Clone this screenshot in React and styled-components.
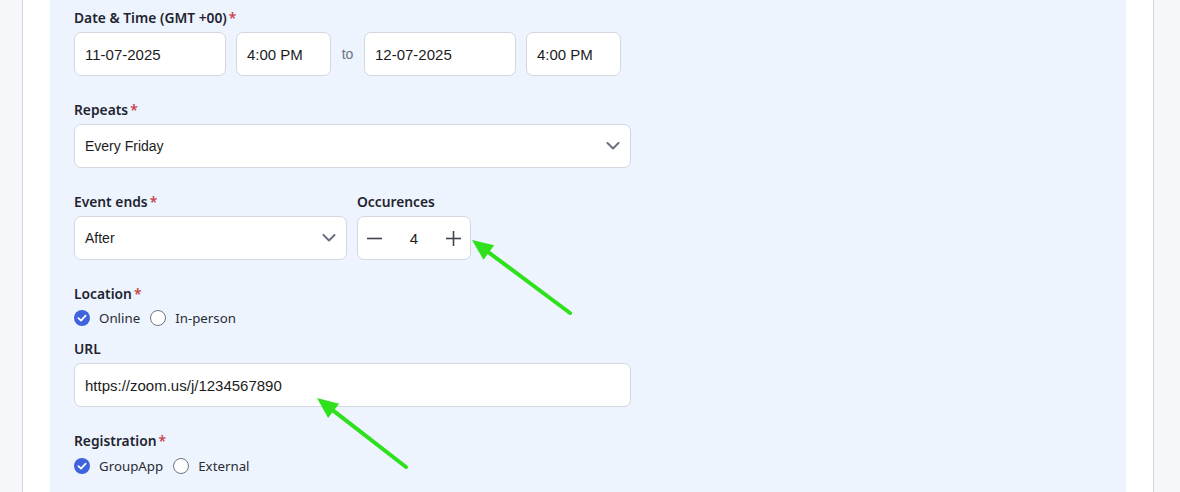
import React from 'react';
import styled, { createGlobalStyle } from 'styled-components';

const COLORS = {
  rail: '#f6f7fa',
  railBorder: '#d6d7dd',
  panel: '#edf4fe',
  border: '#d3d8e0',
  text: '#1c1c1c',
  label: '#1f2430',
  muted: '#6b7280',
  required: '#c9424a',
  accent: '#3e63dd',
  arrow: '#2fe01c',
};

const GlobalStyle = createGlobalStyle`
  html, body {
    margin: 0;
    padding: 0;
    background: ${COLORS.rail};
  }
  * { box-sizing: border-box; }
`;

const Page = styled.div`
  position: relative;
  width: 1180px;
  height: 492px;
  overflow: hidden;
  background: ${COLORS.rail};
  display: flex;
  padding: 0 26px 0 22px;
`;

const Card = styled.div`
  flex: 1;
  background: #fff;
  border-left: 1px solid ${COLORS.railBorder};
  border-right: 1px solid ${COLORS.railBorder};
  padding: 0 27px;
  display: flex;
`;

const Panel = styled.div`
  flex: 1;
  background: ${COLORS.panel};
  padding: 9px 24px 0;
  display: flex;
  flex-direction: column;
`;

const Field = styled.div`
  display: flex;
  flex-direction: column;
  margin-bottom: ${({ $gap }) => $gap ?? 25}px;
`;

const Label = styled.div`
  font-family: 'Noto Sans', 'Open Sans', sans-serif;
  font-size: 13.8px;
  font-weight: 600;
  line-height: 18px;
  color: ${COLORS.label};
  margin-bottom: 5px;
  margin-top: ${({ $top }) => $top || 0}px;
`;

const Required = styled.span`
  color: ${COLORS.required};
  margin-left: 2px;
`;

const Row = styled.div`
  display: flex;
  align-items: center;
  gap: 10px;
`;

const Box = styled.div`
  width: ${({ $w }) => $w}px;
  height: 44px;
  background: #fff;
  border: 1px solid ${COLORS.border};
  border-radius: 7px;
  display: flex;
  align-items: center;
  justify-content: space-between;
  padding: 0 10px;
  font-family: 'Liberation Sans', Arial, sans-serif;
  font-size: ${({ $size }) => $size || 15}px;
  color: ${COLORS.text};
`;

const ToText = styled.span`
  width: 13px;
  text-align: center;
  font-family: 'Liberation Sans', Arial, sans-serif;
  font-size: 14px;
  color: ${COLORS.muted};
`;

const Stepper = styled(Box)`
  padding: 0 8px;
`;

const StepValue = styled.span`
  font-size: 15px;
`;

const Options = styled.div`
  display: flex;
  align-items: center;
  height: 20px;
  margin-top: ${({ $top }) => $top || 0}px;
  gap: 10px;
`;

const Option = styled.label`
  display: flex;
  align-items: center;
  gap: 9px;
  font-family: 'Noto Sans', 'Open Sans', sans-serif;
  font-size: 13.3px;
  color: #2b2b33;
`;

const EmptyRadio = styled.span`
  width: 16px;
  height: 16px;
  border-radius: 50%;
  border: 1.5px solid #6f7480;
  background: #fff;
`;

const Chevron = () => (
  <svg width="14" height="8" viewBox="0 0 14 8" fill="none">
    <polyline points="1.5,1 7,6.5 12.5,1" stroke="#6b7080" strokeWidth="2" strokeLinecap="round" strokeLinejoin="round" />
  </svg>
);

const Minus = () => (
  <svg width="17" height="17" viewBox="0 0 17 17">
    <line x1="1" y1="8.5" x2="16" y2="8.5" stroke="#3f4450" strokeWidth="1.6" />
  </svg>
);

const Plus = () => (
  <svg width="17" height="17" viewBox="0 0 17 17">
    <line x1="1" y1="8.5" x2="16" y2="8.5" stroke="#3f4450" strokeWidth="1.6" />
    <line x1="8.5" y1="1" x2="8.5" y2="16" stroke="#3f4450" strokeWidth="1.6" />
  </svg>
);

const CheckedRadio = () => (
  <svg width="16" height="16" viewBox="0 0 16 16">
    <circle cx="8" cy="8" r="8" fill={COLORS.accent} />
    <polyline points="4.4,8.2 7,10.6 11.6,5.6" fill="none" stroke="#fff" strokeWidth="1.8" strokeLinecap="round" strokeLinejoin="round" />
  </svg>
);

const Overlay = styled.svg`
  position: absolute;
  left: 0;
  top: 0;
  pointer-events: none;
`;

const arrows = [
  { tail: [570, 313], tip: [472, 240] },
  { tail: [406, 467], tip: [317, 398] },
];

function arrowShape({ tail, tip }) {
  const dx = tip[0] - tail[0];
  const dy = tip[1] - tail[1];
  const len = Math.hypot(dx, dy);
  const ux = dx / len;
  const uy = dy / len;
  const bx = tip[0] - ux * 21;
  const by = tip[1] - uy * 21;
  const nx = -uy;
  const ny = ux;
  const head = `${tip[0]},${tip[1]} ${bx + nx * 9},${by + ny * 9} ${bx - nx * 9},${by - ny * 9}`;
  return { line: [tail[0], tail[1], bx + ux * 2, by + uy * 2], head };
}

const Radio = ({ checked, children }) => (
  <Option>
    {checked ? <CheckedRadio /> : <EmptyRadio />}
    {children}
  </Option>
);

export default function App() {
  return (
    <>
      <GlobalStyle />
      <Page>
        <Card>
          <Panel>
            <Field>
              <Label>Date &amp; Time (GMT +00)<Required>*</Required></Label>
              <Row>
                <Box $w={152}>11-07-2025</Box>
                <Box $w={95}>4:00 PM</Box>
                <ToText>to</ToText>
                <Box $w={152}>12-07-2025</Box>
                <Box $w={95}>4:00 PM</Box>
              </Row>
            </Field>

            <Field>
              <Label>Repeats<Required>*</Required></Label>
              <Box $w={557} $size={14}>
                Every Friday
                <Chevron />
              </Box>
            </Field>

            <Field>
              <Row>
                <div>
                  <Label>Event ends<Required>*</Required></Label>
                  <Box $w={273} $size={14}>
                    After
                    <Chevron />
                  </Box>
                </div>
                <div>
                  <Label>Occurences</Label>
                  <Stepper $w={114}>
                    <Minus />
                    <StepValue>4</StepValue>
                    <Plus />
                  </Stepper>
                </div>
              </Row>
            </Field>

            <Field>
              <Label>Location<Required>*</Required></Label>
              <Options>
                <Radio checked>Online</Radio>
                <Radio>In-person</Radio>
              </Options>
              <Label $top={12}>URL</Label>
              <Box $w={557}>https://zoom.us/j/1234567890</Box>
            </Field>

            <Field $gap={0}>
              <Label>Registration<Required>*</Required></Label>
              <Options $top={1}>
                <Radio checked>GroupApp</Radio>
                <Radio>External</Radio>
              </Options>
            </Field>
          </Panel>
        </Card>

        <Overlay width="1180" height="492">
          {arrows.map((a, i) => {
            const { line, head } = arrowShape(a);
            return (
              <g key={i}>
                <line x1={line[0]} y1={line[1]} x2={line[2]} y2={line[3]} stroke={COLORS.arrow} strokeWidth="4" strokeLinecap="round" />
                <polygon points={head} fill={COLORS.arrow} />
              </g>
            );
          })}
        </Overlay>
      </Page>
    </>
  );
}
